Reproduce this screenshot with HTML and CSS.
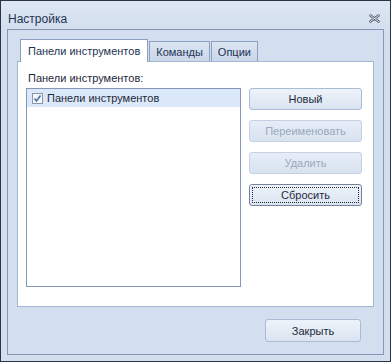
FILE: index.html
```html
<!DOCTYPE html>
<html lang="ru">
<head>
<meta charset="utf-8">
<title>Настройка</title>
<link rel="stylesheet" href="styles.css">
</head>
<body>
<div class="window">
  <div class="titlebar">
    <span class="title">Настройка</span>
    <span class="close">
      <svg width="11" height="9" viewBox="0 0 11 9">
        <path d="M1.5 1.5 L9.5 7.5 M9.5 1.5 L1.5 7.5" stroke="#4a5568" stroke-width="2.4" stroke-linecap="round" fill="none"/>
        <path d="M1.5 1.5 L9.5 7.5 M9.5 1.5 L1.5 7.5" stroke="#ffffff" stroke-width="0.9" stroke-linecap="round" fill="none"/>
      </svg>
    </span>
  </div>
  <div class="frame">
    <div class="tabs">
      <div class="tab active">Панели инструментов</div>
      <div class="tab">Команды</div>
      <div class="tab">Опции</div>
    </div>
    <div class="panel">
      <div class="label">Панели инструментов:</div>
      <div class="content">
        <div class="listbox">
          <div class="row selected">
            <span class="check">
              <svg width="11" height="11" viewBox="0 0 11 11">
                <rect x="0.5" y="0.5" width="10" height="10" fill="#f4f6fa" stroke="#8c96a6"/>
                <path d="M2.5 5.5 L4.5 8 L8.5 2.5" stroke="#4a6fa5" stroke-width="1.6" fill="none"/>
              </svg>
            </span>
            <span>Панели инструментов</span>
          </div>
        </div>
        <div class="buttons">
          <div class="btn">Новый</div>
          <div class="btn disabled">Переименовать</div>
          <div class="btn disabled">Удалить</div>
          <div class="btn focused"><span class="focus">Сбросить</span></div>
        </div>
      </div>
    </div>
    <div class="footer">
      <div class="btn close-btn">Закрыть</div>
    </div>
  </div>
</div>
</body>
</html>
```
FILE: styles.css
```css
* { box-sizing: border-box; }
html, body { margin: 0; padding: 0; }
body {
  font-family: "Liberation Sans", Arial, sans-serif;
  font-size: 11px;
  color: #1e2a3a;
  background: #ffffff;
}
.window {
  width: 391px;
  height: 362px;
  border: 1px solid #2b3445;
  background: #d3dfef;
  display: flex;
  flex-direction: column;
}
.titlebar {
  height: 28px;
  display: flex;
  align-items: flex-start;
  justify-content: space-between;
  padding: 11px 10px 0 7px;
  background: linear-gradient(#dde7f4, #d3dfef);
}
.title {
  font-size: 12px;
  line-height: 14px;
  color: #1e3352;
}
.close { display: flex; margin-top: 2px; }
.frame {
  margin: 0 6px;
  height: 326px;
  border: 1px solid #8497b6;
  display: flex;
  flex-direction: column;
  padding: 9px 9px 0 9px;
}
.tabs {
  display: flex;
  align-items: flex-end;
  padding-left: 3px;
  height: 22px;
  position: relative;
  z-index: 1;
}
.tab {
  height: 20px;
  padding: 0 6px;
  border: 1px solid #8ba0c0;
  border-bottom: none;
  margin-right: 1px;
  background: linear-gradient(#dbe5f2, #c9d7ea);
  display: flex;
  align-items: center;
  color: #1e3352;
}
.tab.active {
  background: #ffffff;
  padding: 0 7px;
  margin-bottom: -1px;
  height: 23px;
}
.panel {
  height: 246px;
  background: #ffffff;
  border: 1px solid #a4b6d1;
  padding: 7px 11px 0 8px;
}
.label {
  height: 19px;
  padding-left: 2px;
  padding-top: 3px;
  color: #1e2a3a;
}
.content {
  display: flex;
  gap: 8px;
}
.listbox {
  width: 216px;
  height: 199px;
  border: 1px solid #8497b6;
  padding: 0;
}
.row {
  height: 18px;
  display: flex;
  align-items: center;
  gap: 4px;
  padding-left: 5px;
}
.row.selected { background: #dbe8f9; }
.check { display: flex; }
.buttons {
  display: flex;
  flex-direction: column;
  gap: 10px;
}
.btn {
  width: 113px;
  height: 22px;
  border: 1px solid #a9bbd5;
  border-radius: 3px;
  background: linear-gradient(#eef3fa, #dae4f1);
  display: flex;
  align-items: center;
  justify-content: center;
  color: #1e2a3a;
}
.btn.disabled {
  color: #9aa9be;
  border-color: #c3d0e2;
  background: linear-gradient(#e6edf7, #d8e2f0);
}
.btn.focused {
  border-color: #75839a;
  padding: 2px;
}
.focus {
  flex: 1;
  height: 100%;
  border: 1px dotted #2a2a2a;
  display: flex;
  align-items: center;
  justify-content: center;
}
.footer {
  display: flex;
  justify-content: flex-end;
  padding: 12px 13px 0 0;
}
.close-btn {
  width: 96px;
  height: 23px;
}
```
